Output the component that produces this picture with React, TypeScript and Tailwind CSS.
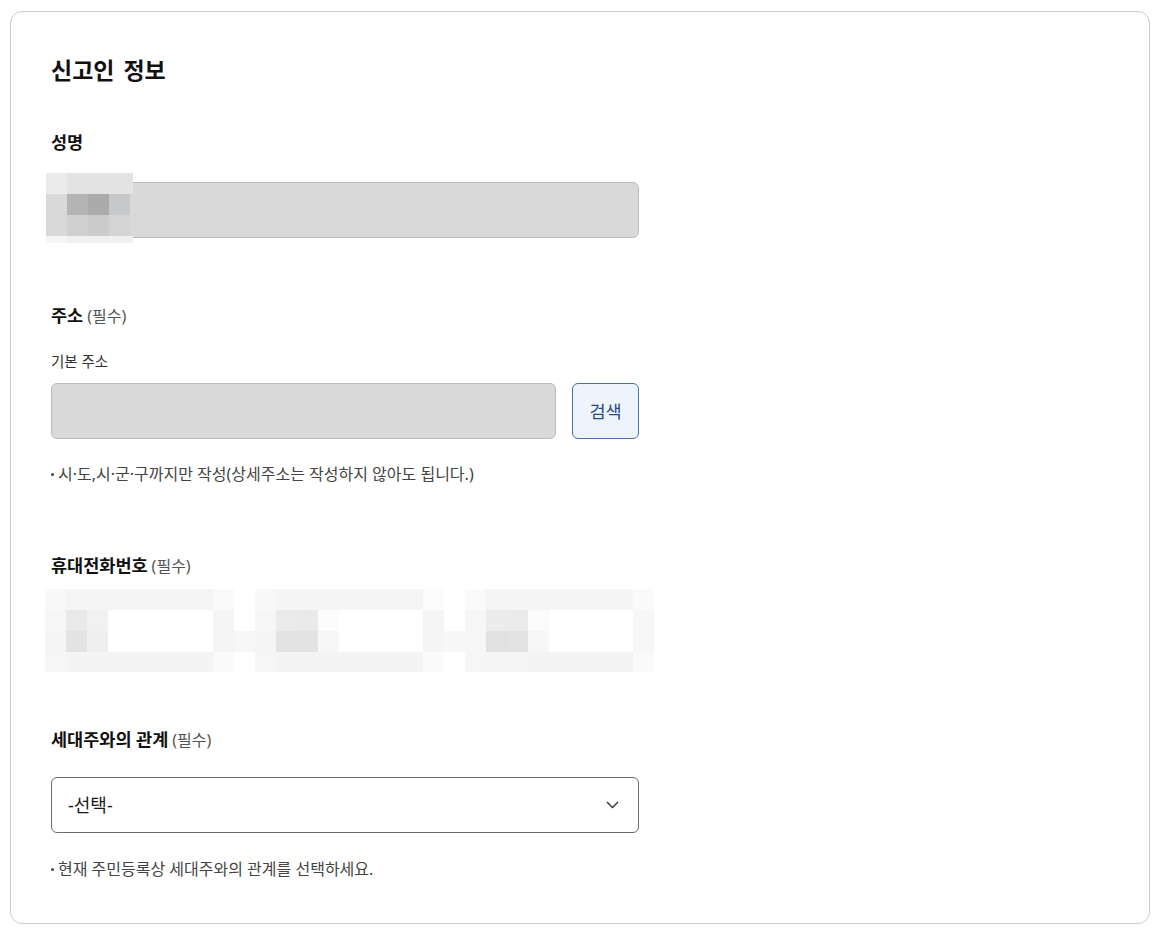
import React from "react";

const C: Record<string, string> = {
  W: "bg-white",
  a: "bg-[#f8f8f8]",
  b: "bg-[#f5f5f5]",
  c: "bg-[#fafafa]",
  d: "bg-[#f6f6f6]",
  e: "bg-[#e9e9e9]",
  f: "bg-[#f1f1f1]",
  g: "bg-[#e3e3e3]",
  h: "bg-[#eeeeee]",
  i: "bg-[#f4f4f4]",
  j: "bg-[#f7f7f7]",
  k: "bg-[#ececec]",
  l: "bg-[#ebebeb]",
  m: "bg-[#fcfcfc]",
  n: "bg-[#e1e1e1]",
  o: "bg-[#fbfbfb]",
  p: "bg-[#d9d9d9]",
  q: "bg-[#b4b4b3]",
  r: "bg-[#ababab]",
  s: "bg-[#c7c8ca]",
  t: "bg-[#d0d0d0]",
  u: "bg-[#cbcbcb]",
  v: "bg-[#d4d4d4]",
  x: "bg-[#f0f0f0]",
};

const phoneRows = [
  "abbbbbbbcW" + "abbbbbbboW" + "cbbbbbbbc",
  "defWWWWWbW" + "dlemWWWWbW" + "dkloWWWWj",
  "bghWWWWWbj" + "bggjWWWWbj" + "dngdWWWWj",
  "diiiiiiicW" + "diiiiiiicW" + "dbbiiiiic",
];

const nameRows = ["lgggg", "pqrsp", "ptuvp", "bxxxx"];

function Label({ text, req }: { text: string; req?: boolean }) {
  return (
    <div className="flex items-baseline h-[24px] leading-[24px]">
      <span className="text-[17.5px] font-bold text-[#111]">{text}</span>
      {req && <span className="ml-[4px] text-[16px] text-[#555]">(필수)</span>}
    </div>
  );
}

function Bullet({ text }: { text: string }) {
  return (
    <div className="flex items-center h-[22px] text-[16px] text-[#444]">
      <span className="w-[3px] h-[3px] rounded-full bg-[#444] mr-[4px]" />
      <span>{text}</span>
    </div>
  );
}

export default function App() {
  return (
    <div className="pt-[11px] pl-[10px] bg-white font-['Noto_Sans','Noto_Sans_CJK_KR',sans-serif]">
      <div className="w-[1140px] h-[913px] border border-[#cccccc] rounded-[12px] bg-white pl-[40px] pt-[42px]">
        <h2 className="text-[23px] leading-[32px] font-bold text-[#111] [word-spacing:3px]">신고인 정보</h2>

        <div className="mt-[44px]">
          <Label text="성명" />
        </div>
        <div className="relative mt-[28px] w-[588px] h-[56px] rounded-[6px] border border-[#bdbdbd] bg-[#d9d9d9]">
          <div className="absolute left-[-6px] top-[-10px] grid grid-cols-[21px_21px_21px_21px_3px] grid-rows-[21px_21px_21px_7px]">
            {nameRows.map((r, ri) =>
              r.split("").map((ch, ci) => <div key={ri + "-" + ci} className={C[ch]} />)
            )}
          </div>
        </div>

        <div className="mt-[65px]">
          <Label text="주소" req />
        </div>
        <div className="mt-[24px] h-[20px] leading-[20px] text-[14.5px] text-[#333]">기본 주소</div>
        <div className="mt-[12px] flex gap-[16px] w-[588px]">
          <div className="w-[505px] h-[56px] rounded-[6px] border border-[#bdbdbd] bg-[#d9d9d9]" />
          <button className="w-[67px] h-[56px] rounded-[6px] border border-[#4a70a8] bg-[#eef4fc] text-[17.5px] text-[#1f4a85]">
            검색
          </button>
        </div>
        <div className="mt-[24px]">
          <Bullet text="시·도,시·군·구까지만 작성(상세주소는 작성하지 않아도 됩니다.)" />
        </div>

        <div className="mt-[68px]">
          <Label text="휴대전화번호" req />
        </div>
        <div className="mt-[12px] ml-[-6px] grid grid-cols-[repeat(29,21px)] grid-rows-[21px_21px_21px_20px]">
          {phoneRows.map((r, ri) =>
            r.split("").map((ch, ci) => <div key={ri + "-" + ci} className={C[ch]} />)
          )}
        </div>

        <div className="mt-[55px]">
          <Label text="세대주와의 관계" req />
        </div>
        <div className="mt-[26px] w-[588px] h-[56px] rounded-[6px] border border-[#6b6b6b] flex items-center justify-between pl-[16px] pr-[19px]">
          <span className="text-[18px] text-[#1a1a1a]">-선택-</span>
          <svg width="13" height="8" viewBox="0 0 13 8" fill="none">
            <polyline points="1,1 6.5,6.5 12,1" stroke="#333" strokeWidth="1.4" />
          </svg>
        </div>
        <div className="mt-[25px]">
          <Bullet text="현재 주민등록상 세대주와의 관계를 선택하세요." />
        </div>
      </div>
    </div>
  );
}
